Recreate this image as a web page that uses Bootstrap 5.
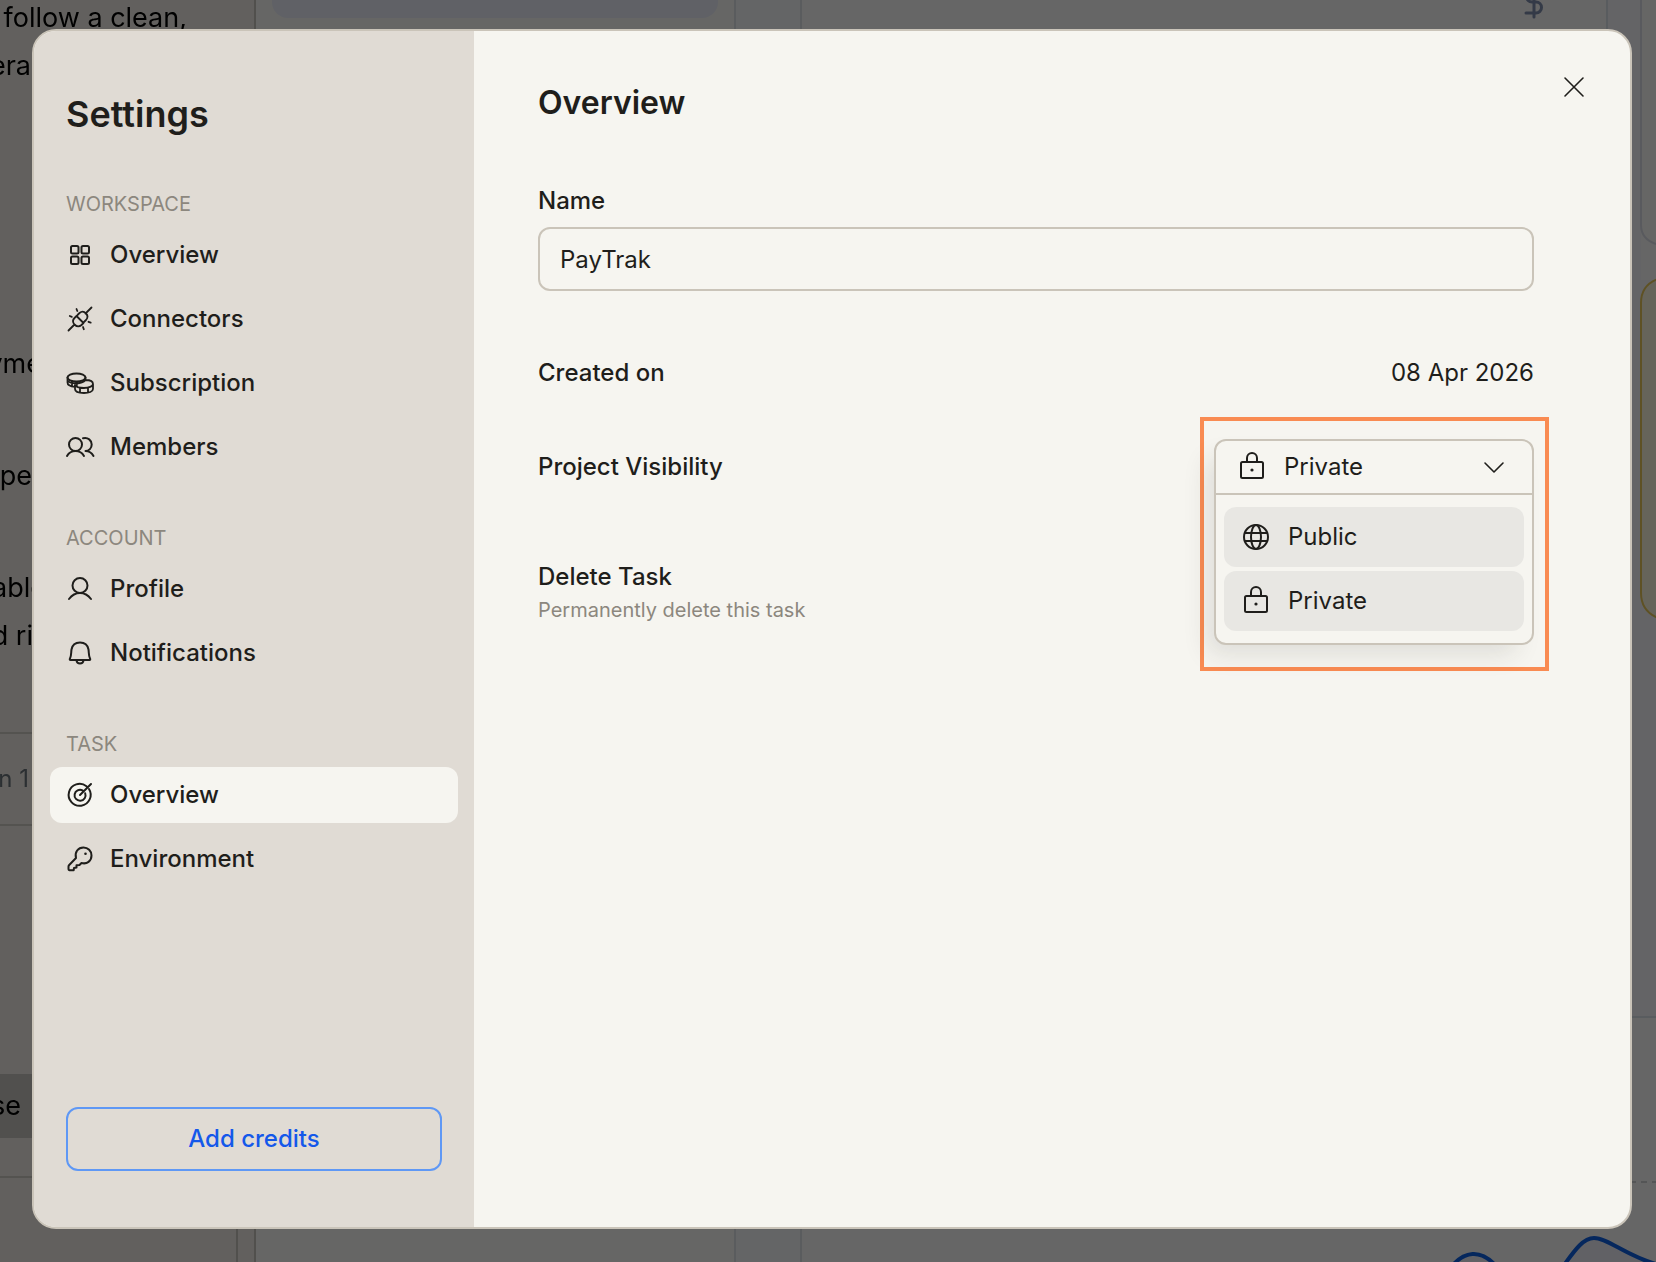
<!DOCTYPE html>
<html lang="en">
<head>
<meta charset="utf-8">
<meta name="viewport" content="width=device-width, initial-scale=1">
<title>Settings</title>
<link href="https://cdn.jsdelivr.net/npm/bootstrap@5.3.0/dist/css/bootstrap.min.css" rel="stylesheet">
<style>
  :root { --ink: #1f1e1b; --muted: #8c877e; --line: #cac4b9; --paper: #f6f5f0; --sand: #e0dbd4; }
  body { font-family: Inter, "Liberation Sans", sans-serif; font-size: 24px; line-height: 32px; color: var(--ink); height: 100vh; overflow: hidden; background: #f5f1ea; }
  svg { display: block; flex: none; overflow: visible; }
  .glyph { fill: none; stroke: currentColor; stroke-width: 2; stroke-linecap: round; stroke-linejoin: round; }
  .glyph-thin { stroke-width: 1.6; }

  /* workspace behind the dialog */
  .chat-pane { width: 256px; flex: none; font-size: 27px; line-height: 48px; border-right: 2px solid #cbc7c0; color: #000; overflow: hidden; white-space: nowrap; position: relative; }
  .chat-pane > * { position: absolute; margin: 0; }
  .chat-line { right: calc(100% - var(--end)); top: var(--top); }
  .chat-rule { left: 0; width: 100%; border-top: 2px solid #d3cfc8; }
  .chat-shade { left: 0; width: 100%; top: 1074px; height: 64px; background: #cbc8c2; }
  .chat-edge { left: 236px; top: 1176px; bottom: 0; border-left: 2px solid #cbc7c0; }
  .pane-nav { width: 480px; flex: none; background: #fffefd; border-right: 2px solid #e2e5ec; padding: 0 16px; }
  .pane-pill { height: 18px; background: #eff3fe; border-radius: 0 0 16px 16px; }
  .pane-gap { width: 66px; flex: none; background: #fbfcfe; border-right: 2px solid #e2e5ec; }
  .pane-main { background: #fffefe; position: relative; overflow: hidden; }
  .pane-main > * { position: absolute; }
  .veil { background: rgba(0, 0, 0, .6); }

  /* dialog */
  .settings-dialog { margin: 29px 24px 33px 32px; border: 2px solid var(--line); border-radius: 24px; background: var(--paper); overflow: hidden; }
  .side { width: 440px; flex: none; background: var(--sand); padding: 59px 16px 56px; }
  .side h1 { font-size: 36px; line-height: 48px; font-weight: 600; margin: 0 16px 51px; }
  .side h2 { font-size: 20px; line-height: 30px; font-weight: 400; color: var(--muted); margin: 0 0 8px; padding: 0 16px; }
  .side section + section { margin-top: 48px; }
  .side .nav { gap: 8px; }
  .side .nav-link { display: flex; align-items: center; gap: 16px; padding: 12px 16px; border-radius: 12px; color: var(--ink); font-weight: 500; }
  .side .nav-link.active { background: var(--paper); }
  .btn-credits { margin: 0 16px; height: 64px; border: 2px solid #5f98f5; border-radius: 12px; color: #1458ea; font-size: 24px; font-weight: 500; }
  .content-pane { padding: 52px 96px 0 64px; position: relative; }
  .content-pane h2 { font-size: 32px; line-height: 40px; font-weight: 600; margin: 0 0 62px; }
  .field-name { font-weight: 500; margin: 0; }
  .name-box { height: 64px; border: 2px solid var(--line); border-radius: 12px; background: transparent; color: var(--ink); font-size: 24px; padding: 0 20px; margin: 10px 0 66px; }
  .close-x { position: absolute; top: 40px; right: 40px; border: 0; background: none; padding: 0; color: var(--ink); }
  .muted-note { font-size: 20px; line-height: 28px; color: var(--muted); margin: 3px 0 0; }
  .visibility-row { margin-top: 52px; padding: 10px 0; position: relative; }
  .picker { position: absolute; right: -15px; top: -24px; width: 349px; border: 4px solid #f98b52; padding: 18px 11px 22px 10px; }
  .picker-box { border: 2px solid var(--line); border-radius: 12px; background: var(--paper); box-shadow: -12px 14px 26px -6px rgba(40, 40, 30, .12); }
  .picker-toggle { display: flex; align-items: center; width: 100%; height: 54px; border: 0; border-bottom: 2px solid var(--line); background: none; color: var(--ink); padding: 0 22px; gap: 18px; }
  .picker-list { padding: 12px 8px; display: grid; gap: 4px; }
  .picker-item { display: flex; align-items: center; gap: 18px; height: 60px; border: 0; border-radius: 12px; background: #e8e7e3; color: var(--ink); padding: 0 18px; }
  .delete-row { margin-top: 68px; }
</style>
</head>
<body>
<div class="position-fixed top-0 start-0 w-100 h-100 d-flex" aria-hidden="true">
  <div class="chat-pane">
    <p class="chat-line" style="--end:187px;--top:-6px">follow a clean,</p>
    <p class="chat-line" style="--end:31px;--top:42px">era</p>
    <p class="chat-line" style="--end:42px;--top:340px">yme</p>
    <p class="chat-line" style="--end:32px;--top:452px">pe</p>
    <p class="chat-line" style="--end:46px;--top:564px">able</p>
    <p class="chat-line" style="--end:33px;--top:612px">d ri</p>
    <div class="chat-rule" style="top:732px"></div>
    <p class="chat-line fs-4 text-secondary" style="--end:29px;--top:755px">n 1</p>
    <div class="chat-rule" style="top:824px"></div>
    <div class="chat-shade"></div>
    <p class="chat-line" style="--end:21px;--top:1082px">se</p>
    <div class="chat-rule" style="top:1176px"></div>
    <div class="chat-edge"></div>
  </div>
  <div class="pane-nav"><div class="pane-pill"></div></div>
  <div class="pane-gap"></div>
  <div class="pane-main flex-grow-1">
    <svg width="854" height="1262" viewBox="802 0 854 1262" fill="none">
      <path d="M1607 0h34v280h15v738h-48V0z" fill="#fafbfe"/>
      <path d="M1607 0v1018M1630 1017h26" stroke="#dfe5ee" stroke-width="2"/>
      <path d="M1641 0v225q0 14 15 19V0z" fill="#fffefd"/>
      <path d="M1641 0v225q0 14 15 19" stroke="#dfe2ea" stroke-width="2"/>
      <path d="M1658 279q-17 6-17 24v290q0 18 17 25z" fill="#fff9e2" stroke="#eccb5a" stroke-width="2"/>
      <path d="M1534-16v33M1526 13h10a5.500 5.500 0 0 0 0-11h-4a5.500 5.500 0 0 1 0-11h9" stroke="#8292b2" stroke-width="3" stroke-linecap="round"/>
      <path d="M1630 1182h26" stroke="#d2d4d8" stroke-width="2" stroke-dasharray="6 5"/>
      <path d="M1452 1266c12-13 28-17 44 0M1562 1268c14-20 22-30 32-30 14 0 32 18 62 26v6h-94z" fill="#f3f3fc"/>
      <path d="M1452 1266c12-14 28-18 44 0M1562 1268c14-20 22-30 32-30 14 0 32 18 62 26" stroke="#0e62e8" stroke-width="4"/>
    </svg>
  </div>
</div>
<div class="veil position-fixed top-0 start-0 w-100 h-100"></div>

<div class="position-relative d-flex h-100">
  <main class="settings-dialog d-flex flex-grow-1" role="dialog" aria-labelledby="dialog-title">
    <aside class="side d-flex flex-column">
      <h1 id="dialog-title">Settings</h1>
      <section>
        <h2>WORKSPACE</h2>
        <nav class="nav flex-column">
          <a class="nav-link" href="#"><svg class="glyph" width="28" height="28" viewBox="0 0 28 28"><rect x="5" y="5" width="7.500" height="7.500" rx="1.500"/><rect x="15.500" y="5" width="7.500" height="7.500" rx="1.500"/><rect x="5" y="15.500" width="7.500" height="7.500" rx="1.500"/><rect x="15.500" y="15.500" width="7.500" height="7.500" rx="1.500"/></svg>Overview</a>
          <a class="nav-link" href="#"><svg class="glyph" width="28" height="28" viewBox="0 0 28 28"><path d="M2.500 25.500 8.500 19.500M19.500 8.500l6-6M8.500 19.500q-3-3.500 0-6.500l2-2 7 7-2 2q-3.500 3-7 -.5zM11.500 10l2-2q3.500-3 6.500.5 3 3 0 6.500l-2 2M10.500 4l.8 2M3.800 11l2 .8M17 22l.8 2.200M22.500 16.800l2.200.8" stroke-width="1.800"/></svg>Connectors</a>
          <a class="nav-link" href="#"><svg class="glyph" width="28" height="28" viewBox="0 0 28 28"><ellipse cx="10.500" cy="8.500" rx="9" ry="4"/><path d="M1.500 8.500v5c0 2.500 3 4 7.500 4.300M19.500 8.500v2M1.500 11.500c1.500 2 5 2.700 8.500 2.500M6 12.500v4.500M11 13v3M9 16v4c0 2.500 4 4 9 4s9-1.500 9-4v-5c0-2.500-3-4-7.500-4-2 2-4 3-9 3.500M9 16c1 2 4.500 3 9 3s9-1.500 9-4M14 19v4M22 19v4" stroke-width="1.800"/></svg>Subscription</a>
          <a class="nav-link" href="#"><svg class="glyph" width="28" height="28" viewBox="0 0 28 28"><circle cx="9.500" cy="11.500" r="6.500"/><path d="M1 23c2-3.500 5-5 8.500-5s6.500 1.500 8.500 5M17 5.300c5-1.300 8.700 2 8.700 6.200 0 3.600-2.700 6.500-6.200 6.500 3.500 0 6 1.500 8 5"/></svg>Members</a>
        </nav>
      </section>
      <section>
        <h2>ACCOUNT</h2>
        <nav class="nav flex-column">
          <a class="nav-link" href="#"><svg class="glyph" width="28" height="28" viewBox="0 0 28 28"><circle cx="14" cy="10.500" r="7.500"/><path d="M3 24c3-4 6.500-6 11-6s8 2 11 6"/></svg>Profile</a>
          <a class="nav-link" href="#"><svg class="glyph" width="28" height="28" viewBox="0 0 28 28"><path d="M4.500 21c-.8 0-.9-.6-.6-1.200C5.500 17 5 13.500 5.500 10.500 6.300 6 9.500 3.500 14 3.500s7.700 2.500 8.500 7c.5 3 0 6.500 1.600 9.300.3.600.2 1.200-.6 1.200zM10.500 21.500c.5 4 6.500 4 7 0"/></svg>Notifications</a>
        </nav>
      </section>
      <section>
        <h2>TASK</h2>
        <nav class="nav flex-column">
          <a class="nav-link active" aria-current="page" href="#"><svg class="glyph" width="28" height="28" viewBox="0 0 28 28"><path d="M20.500 5.200A11 11 0 1 0 23 8M16.500 9.300a5.500 5.500 0 1 0 2.700 3M14 14 25 3"/></svg>Overview</a>
          <a class="nav-link" href="#"><svg class="glyph" width="28" height="28" viewBox="0 0 28 28"><path d="M10 13C8.500 7 12 2.500 17.500 2.500c4.500 0 8 3.500 8 8 0 5.500-4.500 9-10 7.500l-2 2-3 .3v2.200l-2.500.5-.3 2.200H3.500q-1-.2-1-1v-2.700q0-.8.700-1.500z"/><circle cx="19.500" cy="8.800" r="1.300" fill="currentColor" stroke="none"/></svg>Environment</a>
        </nav>
      </section>
      <button type="button" class="btn btn-credits mt-auto">Add credits</button>
    </aside>

    <section class="content-pane flex-grow-1">
      <button type="button" class="close-x" aria-label="Close"><svg class="glyph glyph-thin" width="32" height="32" viewBox="0 0 32 32"><path d="m7 7 18 18M25 7 7 25"/></svg></button>
      <h2>Overview</h2>
      <label class="field-name d-block" for="project-name">Name</label>
      <input class="name-box d-block w-100" id="project-name" type="text" value="PayTrak">
      <div class="d-flex justify-content-between"><span class="field-name">Created on</span><span>08 Apr 2026</span></div>
      <div class="visibility-row">
        <span class="field-name" id="visibility-label">Project Visibility</span>
        <div class="picker">
          <div class="picker-box">
            <button type="button" class="picker-toggle" aria-expanded="true" aria-labelledby="visibility-label">
              <svg class="glyph" width="28" height="28" viewBox="0 0 28 28"><rect x="3" y="9" width="22" height="16" rx="1.500"/><path d="M9 9V5a5 5 0 0 1 10 0V9"/><circle cx="14" cy="17" r="1.600" fill="currentColor" stroke="none"/></svg>
              Private
              <svg class="glyph glyph-thin ms-auto" width="32" height="32" viewBox="0 0 32 32"><path d="m7 12 9 9 9-9"/></svg>
            </button>
            <div class="picker-list">
              <button type="button" class="picker-item"><svg class="glyph" width="28" height="28" viewBox="0 0 28 28"><circle cx="14" cy="14" r="12"/><ellipse cx="14" cy="14" rx="5" ry="12"/><path d="M3 10h22M3 18h22"/></svg>Public</button>
              <button type="button" class="picker-item"><svg class="glyph" width="28" height="28" viewBox="0 0 28 28"><rect x="3" y="9" width="22" height="16" rx="1.500"/><path d="M9 9V5a5 5 0 0 1 10 0V9"/><circle cx="14" cy="17" r="1.600" fill="currentColor" stroke="none"/></svg>Private</button>
            </div>
          </div>
        </div>
      </div>
      <div class="delete-row">
        <div class="field-name">Delete Task</div>
        <p class="muted-note">Permanently delete this task</p>
      </div>
    </section>
  </main>
</div>
<script src="https://cdn.jsdelivr.net/npm/bootstrap@5.3.0/dist/js/bootstrap.bundle.min.js"></script>
</body>
</html>
